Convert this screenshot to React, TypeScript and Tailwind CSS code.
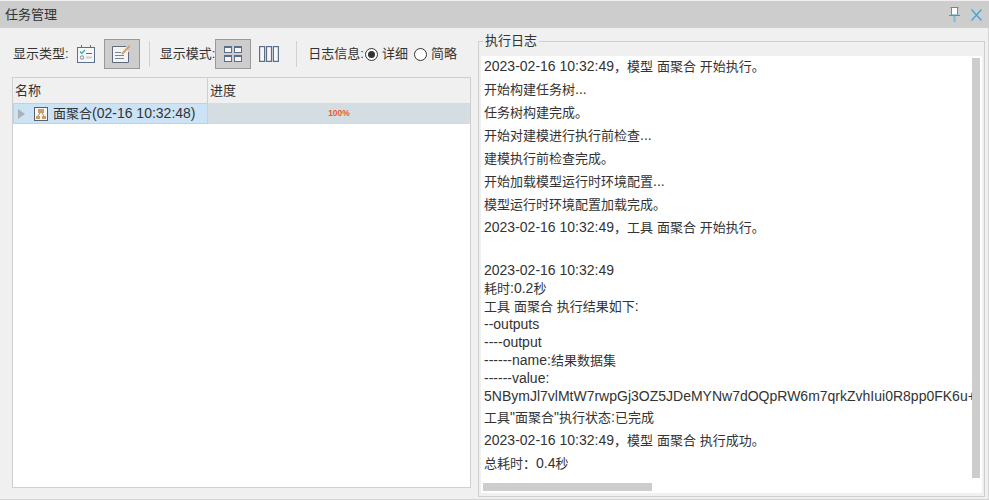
const fontCn = "font-['Liberation_Sans','Noto_Sans_CJK_SC',sans-serif]";

const logLines = [
  '2023-02-16 10:32:49，模型 面聚合 开始执行。',
  '开始构建任务树...',
  '任务树构建完成。',
  '开始对建模进行执行前检查...',
  '建模执行前检查完成。',
  '开始加载模型运行时环境配置...',
  '模型运行时环境配置加载完成。',
  '2023-02-16 10:32:49，工具 面聚合 开始执行。',
];

const resultLines = [
  '2023-02-16 10:32:49',
  '耗时:0.2秒',
  '工具 面聚合 执行结果如下:',
  '--outputs',
  '----output',
  '------name:结果数据集',
  '------value:',
  '5NBymJl7vlMtW7rwpGj3OZ5JDeMYNw7dOQpRW6m7qrkZvhIui0R8pp0FK6u+',
];

const endLines = [
  '工具"面聚合"执行状态:已完成',
  '2023-02-16 10:32:49，模型 面聚合 执行成功。',
  '总耗时：0.4秒',
];

// latin runs are a bit bigger than the chinese ones in the original
function Mixed({ text }: { text: string }) {
  const parts = text.split(/([\x20-\x7e]+)/).filter(Boolean);
  return (
    <>
      {parts.map((p, i) =>
        /^[\x20-\x7e]+$/.test(p) ? (
          <span key={i} className="text-[14px]">{p}</span>
        ) : (
          <span key={i}>{p}</span>
        ),
      )}
    </>
  );
}

function TypeListIcon() {
  return (
    <svg width="18" height="18" viewBox="0 0 18 18" fill="none">
      <rect x="0.5" y="2.5" width="17" height="15" fill="#f7f7f7" stroke="#5b6f8a" />
      <path d="M4.5 0v3M13.5 0v3" stroke="#5b6f8a" />
      <path d="M3 6.5l1.8 1.8L8 5" stroke="#2fb39a" strokeWidth="1.3" />
      <path d="M9 8.5h6" stroke="#5b6f8a" />
      <circle cx="5" cy="12.5" r="1.7" stroke="#7d8a9c" />
      <path d="M9 12.5h6" stroke="#c9ced4" strokeWidth="2" />
    </svg>
  );
}

function NoteIcon() {
  return (
    <svg width="19" height="18" viewBox="0 0 19 18" fill="none">
      <path d="M16.5 7v10.5H0.5V1.5H14" fill="#f4f4f4" stroke="#5f6b7a" />
      <path d="M3 7.5h6M3 10.5h9M3 13.5h9" stroke="#7a8592" />
      <path d="M10 9L17.5 1" stroke="#d0a070" strokeWidth="2" />
    </svg>
  );
}

function GridIcon() {
  return (
    <svg width="18" height="16" viewBox="0 0 18 16" fill="#f4f4f4" stroke="#5b6f8a">
      <rect x="0.5" y="0.5" width="7" height="6" />
      <rect x="10.5" y="0.5" width="7" height="6" />
      <rect x="0.5" y="9.5" width="7" height="6" />
      <rect x="10.5" y="9.5" width="7" height="6" />
      <path d="M1 1.5h6M11 1.5h6M1 10.5h6M11 10.5h6" />
    </svg>
  );
}

function ColumnsIcon() {
  return (
    <svg width="20" height="16" viewBox="0 0 20 16" fill="#f7f7f7" stroke="#5b6f8a" strokeWidth="1.2">
      <rect x="0.6" y="0.6" width="5" height="14.8" />
      <rect x="7.5" y="0.6" width="5" height="14.8" />
      <rect x="14.4" y="0.6" width="5" height="14.8" />
    </svg>
  );
}

function ModelIcon() {
  return (
    <svg width="14" height="14" viewBox="0 0 14 14" fill="none">
      <rect x="0.5" y="0.5" width="13" height="13" fill="#f8f8f8" stroke="#55606e" />
      <rect x="4" y="2" width="6" height="4" fill="#d09a65" />
      <rect x="2" y="9" width="4" height="3" fill="#d09a65" />
      <rect x="8" y="9" width="4" height="3" fill="#d09a65" />
      <path d="M6 6L4 9M8 6l2 3" stroke="#8a8a8a" />
    </svg>
  );
}

function PinIcon() {
  return (
    <svg width="11" height="15" viewBox="0 0 11 15" fill="none">
      <rect x="2.5" y="0.5" width="6" height="7.5" fill="#fff" stroke="#2f9fd8" />
      <path d="M1.5 0.5h8" stroke="#2f9fd8" />
      <path d="M0 8.5h11" stroke="#2f9fd8" />
      <path d="M5.5 9v6" stroke="#7fb9dc" strokeWidth="2" />
    </svg>
  );
}

function CloseIcon() {
  return (
    <svg width="11" height="12" viewBox="0 0 11 12" fill="none">
      <path d="M0.5 0.5l10 11M10.5 0.5l-10 11" stroke="#3ea6dc" strokeWidth="1.3" />
    </svg>
  );
}

function Radio({ checked, label }: { checked?: boolean; label: string }) {
  return (
    <div className="flex items-center gap-[4px]">
      <div className="w-[13px] h-[13px] rounded-full border border-[#333] bg-white flex items-center justify-center">
        {checked && <div className="w-[7px] h-[7px] rounded-full bg-[#333]" />}
      </div>
      <span>{label}</span>
    </div>
  );
}

export default function App() {
  return (
    <div className={`w-[989px] h-[500px] bg-[#f0f0f0] flex flex-col overflow-hidden text-[13px] text-[#333] ${fontCn}`}>
      <div className="h-[27px] mt-px shrink-0 bg-[#cdcdcd] flex items-center justify-between pl-[5px] pr-[7px]">
        <span>任务管理</span>
        <div className="flex items-center gap-[11px]">
          <PinIcon />
          <CloseIcon />
        </div>
      </div>

      <div className="flex flex-1 min-h-0 pl-[12px] pr-[3px] pb-[2px] border-r border-b border-[#d4d4d4]">
        <div className="w-[459px] shrink-0 flex flex-col pb-[9px]">
          <div className="h-[49px] pt-[3px] shrink-0 flex items-center">
            <span className="ml-px mr-[8px]">显示类型:</span>
            <TypeListIcon />
            <div className="ml-[9px] w-[36px] h-[30px] bg-[#cdcdcd] border border-[#999] flex items-center justify-center">
              <NoteIcon />
            </div>
            <div className="mx-[9px] w-px h-[26px] bg-[#d0d0d0]" />
            <span className="ml-px">显示模式:</span>
            <div className="w-[36px] h-[30px] bg-[#cdcdcd] border border-[#999] flex items-center justify-center">
              <GridIcon />
            </div>
            <div className="ml-[8px]"><ColumnsIcon /></div>
            <div className="ml-[17px] mr-[11px] w-px h-[26px] bg-[#d0d0d0]" />
            <span className="mr-[1px]">日志信息:</span>
            <div className="flex gap-[6px]">
              <Radio checked label="详细" />
              <Radio label="简略" />
            </div>
          </div>

          <div className="flex-1 min-h-0 bg-white border border-[#cfcfcf]">
            <div className="h-[25px] bg-[#f0f0f0] flex">
              <div className="w-[195px] pl-[2px] border-r border-[#cfcfcf] flex items-center">名称</div>
              <div className="flex-1 pl-[2px] flex items-center">进度</div>
            </div>
            <div className="flex h-[21px]">
              <div className="w-[195px] bg-[#cbe3f5] border border-[#b5d5ec] flex items-center pl-[4px]">
                <div className="w-0 h-0 border-y-[5px] border-y-transparent border-l-[7px] border-l-[#b0b0b0]" />
                <div className="ml-[9px]"><ModelIcon /></div>
                <span className="ml-[5px] whitespace-nowrap"><Mixed text="面聚合(02-16 10:32:48)" /></span>
              </div>
              <div className="flex-1 bg-[#d3dde2] flex items-center justify-center">
                <span className="text-[8.5px] font-bold text-[#ef5a30]">100%</span>
              </div>
            </div>
          </div>
        </div>

        <div className="ml-[7px] flex-1 min-w-0 flex flex-col pt-[6px]">
          <fieldset className="flex-1 min-h-0 min-w-0 border border-[#cfcfcf] pl-[2px] pr-[2px] pt-[8px] pb-[3px]">
            <legend className="ml-[2px] px-[2px] leading-[14px]">执行日志</legend>
            <div className="h-full bg-white flex flex-col overflow-hidden">
              <div className="flex-1 min-h-0 flex">
                <div className="flex-1 min-w-0 overflow-hidden pl-[3px] whitespace-nowrap">
                  <div className="-mt-px">
                    {logLines.map((l) => (
                      <div key={l} className="h-[23px] leading-[23px]"><Mixed text={l} /></div>
                    ))}
                  </div>
                  <div className="h-[22px]" />
                  {resultLines.map((l) => (
                    <div key={l} className="h-[18px] leading-[18px]"><Mixed text={l} /></div>
                  ))}
                  <div className="h-[1px]" />
                  {endLines.map((l) => (
                    <div key={l} className="h-[23px] leading-[23px]"><Mixed text={l} /></div>
                  ))}
                </div>
                <div className="w-[8px] shrink-0 mr-[2px] mt-[2px] bg-[#cdcdcd]" />
              </div>
              <div className="h-[15px] shrink-0 flex items-end pl-[2px] pb-[2px]">
                <div className="w-[169px] h-[8px] bg-[#cdcdcd]" />
              </div>
            </div>
          </fieldset>
        </div>
      </div>
    </div>
  );
}
